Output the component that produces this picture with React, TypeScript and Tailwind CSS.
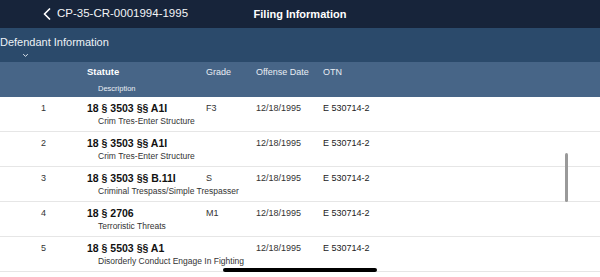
import React from "react";

const rows = [
  { n: "1", statute: "18 § 3503 §§ A1I", grade: "F3", date: "12/18/1995", otn: "E 530714-2", desc: "Crim Tres-Enter Structure" },
  { n: "2", statute: "18 § 3503 §§ A1I", grade: "", date: "12/18/1995", otn: "E 530714-2", desc: "Crim Tres-Enter Structure" },
  { n: "3", statute: "18 § 3503 §§ B.11I", grade: "S", date: "12/18/1995", otn: "E 530714-2", desc: "Criminal Trespass/Simple Trespasser" },
  { n: "4", statute: "18 § 2706", grade: "M1", date: "12/18/1995", otn: "E 530714-2", desc: "Terroristic Threats" },
  { n: "5", statute: "18 § 5503 §§ A1", grade: "", date: "12/18/1995", otn: "E 530714-2", desc: "Disorderly Conduct Engage In Fighting" },
];

const cols = "grid grid-cols-[87px_119px_50px_67px_1fr] items-center";

export default function App() {
  return (
    <div
      className="relative w-[600px] h-[277px] overflow-hidden bg-white"
      style={{ fontFamily: '"Liberation Sans", Arial, sans-serif' }}
    >
      {/* Nav bar */}
      <div className="h-[28px] bg-[#17243a] grid grid-cols-[1fr_auto_1fr] items-center text-white">
        <div className="flex items-center pl-[43px] gap-[6px]">
          <svg width="8" height="12" viewBox="0 0 8 12" fill="none">
            <path d="M6.5 1 L1.5 6 L6.5 11" stroke="white" strokeWidth="1.7" strokeLinecap="round" strokeLinejoin="round" />
          </svg>
          <span className="text-[11.5px] leading-none text-[#f2f4f7]">CP-35-CR-0001994-1995</span>
        </div>
        <div className="text-[11px] font-bold leading-none">Filing Information</div>
        <div />
      </div>

      {/* Defendant band */}
      <div className="h-[34px] bg-[#2b4a6b] text-[#eef2f6]">
        <div className="pt-[8px] text-[11px] leading-[12px]">Defendant Information</div>
        <div className="pl-[23px] pt-[6px] leading-none">
          <svg width="5" height="3" viewBox="0 0 5 3" fill="none" className="block">
            <path d="M0.5 0.5 L2.5 2.3 L4.5 0.5" stroke="#dfe6ee" strokeWidth="1" strokeLinecap="round" />
          </svg>
        </div>
      </div>

      {/* Header row */}
      <div className="h-[35px] bg-[#476587] text-[#e9eef4]">
        <div className={`${cols} pt-[4px]`}>
          <div />
          <div className="text-[9.5px] font-bold text-white leading-[12px]">Statute</div>
          <div className="text-[9px] leading-[12px]">Grade</div>
          <div className="text-[9px] leading-[12px]">Offense Date</div>
          <div className="text-[9px] leading-[12px]">OTN</div>
        </div>
        <div className="pl-[98px] mt-[6px] text-[7.5px] leading-[10px]">Description</div>
      </div>

      {/* Rows */}
      {rows.map((r) => (
        <div key={r.n} className="h-[35px] border-b border-[#e6e6e6] bg-white text-[#1a1a1a]">
          <div className={`${cols} pt-[5px]`}>
            <div className="text-center text-[9px] leading-[12px] text-[#333]">{r.n}</div>
            <div className="text-[10.5px] font-bold leading-[12px] text-[#111]">{r.statute}</div>
            <div className="text-[9px] leading-[12px] text-[#333]">{r.grade}</div>
            <div className="text-[9px] leading-[12px] text-[#333]">{r.date}</div>
            <div className="text-[9px] leading-[12px] text-[#222]">{r.otn}</div>
          </div>
          <div className="pl-[98px] mt-[2px] text-[8.5px] leading-[10px] text-[#333]">{r.desc}</div>
        </div>
      ))}

      {/* Scroll indicator */}
      <div className="absolute left-[565px] top-[153px] w-[2.5px] h-[49px] rounded-full bg-[#9a9a9a]" />

      {/* Home indicator */}
      <div className="absolute left-[223px] top-[268px] w-[154px] h-[4px] rounded-full bg-black" />
    </div>
  );
}
